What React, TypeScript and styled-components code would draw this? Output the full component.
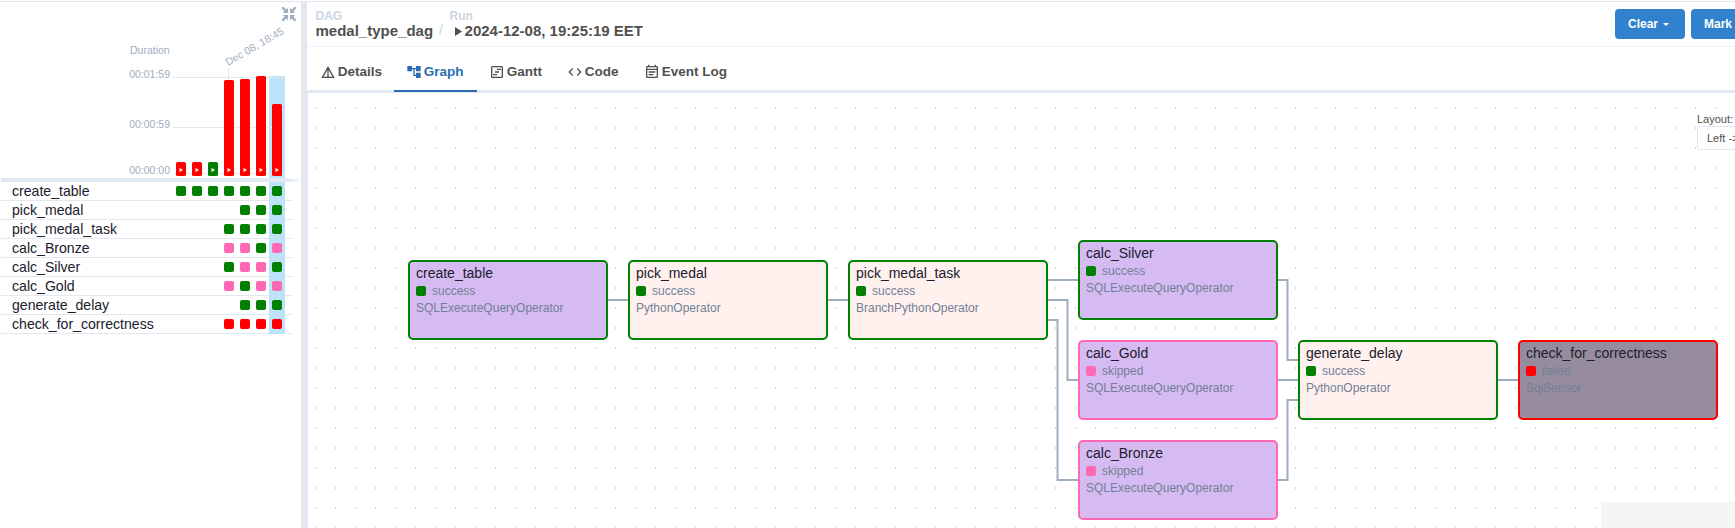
import React from 'react';
import styled, { createGlobalStyle } from 'styled-components';
import { MdDetails, MdAccountTree, MdOutlineViewTimeline, MdCode, MdOutlineEventNote } from 'react-icons/md';

const GREEN = '#008000';
const RED = '#ff0000';
const PINK = '#ff69b4';
const LINE = '#e2e8f0';

const Global = createGlobalStyle`
  * { box-sizing: border-box; }
  body { margin: 0; background: #fff; overflow: hidden; font-family: "Liberation Sans", Arial, sans-serif; color: #1a202c; }
`;

const Page = styled.div`
  display: flex;
  width: 1735px;
  height: 528px;
  overflow: hidden;
  border-top: 1px solid #fff;
`;
const GridPanel = styled.aside`
  width: 301px;
  flex: none;
  display: flex;
  flex-direction: column;
  border-top: 1px solid ${LINE};
  padding-left: 1px;
`;
const Splitter = styled.div`
  width: 6px;
  flex: none;
  background: ${LINE};
`;
const Main = styled.main`
  flex: 1;
  min-width: 0;
  display: flex;
  flex-direction: column;
  border-top: 1px solid ${LINE};
`;

const ChartHead = styled.div`
  position: relative;
  height: 176px;
  flex: none;
`;
const CollapseIcon = styled.svg`
  position: absolute;
  left: 279.5px;
  top: 3.5px;
  width: 16px;
  height: 16px;
`;
const Chart = styled.svg`
  display: block;
  width: 300px;
  height: 176px;
  font-size: 10.5px;
  fill: #a0aec0;
`;
const HeadRule = styled.div`
  height: 4px;
  width: 300px;
  flex: none;
  background: ${LINE};
  clip-path: polygon(0 0, 284px 0, 300px 70%, 284px 100%, 0 100%);
`;
const TaskRow = styled.div`
  height: 19px;
  flex: none;
  width: 292px;
  border-bottom: 1px solid ${LINE};
  display: flex;
  align-items: stretch;
`;
const TaskName = styled.div`
  flex: 1;
  padding-left: 11px;
  font-size: 14.1px;
  line-height: 18px;
  white-space: nowrap;
`;
const Cell = styled.div<{ $selected?: boolean }>`
  width: 16px;
  height: ${p => (p.$selected ? 19 : 18)}px;
  padding-bottom: ${p => (p.$selected ? 1 : 0)}px;
  background: ${p => (p.$selected ? '#bee3f8' : 'transparent')};
  display: flex;
  align-items: center;
  justify-content: center;
`;
const Cells = styled.div`
  display: flex;
  margin-right: 8px;
`;
const Square = styled.div<{ $color: string }>`
  width: 10px;
  height: 10px;
  border-radius: 2px;
  background: ${p => p.$color};
`;

const Header = styled.header`
  height: 45px;
  flex: none;
  display: flex;
  justify-content: space-between;
  border-bottom: 1px solid #edf2f7;
  padding: 7px 0 0 8.5px;
`;
const Crumbs = styled.div`
  display: flex;
  font-weight: bold;
  white-space: nowrap;
`;
const Crumb = styled.div``;
const CrumbLabel = styled.div`
  font-size: 12px;
  line-height: 15px;
  color: #cbd5e0;
`;
const CrumbValue = styled.div`
  display: flex;
  align-items: center;
  font-size: 15px;
  line-height: 14px;
  color: #51504f;
`;
const Slash = styled.div`
  width: 16.5px;
  padding: 14px 0 0 6px;
  font-weight: normal;
  font-size: 14px;
  line-height: 14px;
  color: #cbd5e0;
`;
const PlayMark = styled.svg`
  width: 7px;
  height: 9px;
  margin: 0 3px 0 5px;
`;
const Actions = styled.div`
  display: flex;
  gap: 6px;
  width: 120px;
  overflow: hidden;
`;
const Button = styled.button<{ $width: number }>`
  width: ${p => p.$width}px;
  height: 30px;
  flex: none;
  display: flex;
  align-items: center;
  gap: 5px;
  padding: 0 0 0 13px;
  border: 0;
  border-radius: 4px;
  background: #3182ce;
  color: #fff;
  font: bold 12px "Liberation Sans", Arial, sans-serif;
  white-space: nowrap;
`;
const Caret = styled.i`
  border: 3px solid transparent;
  border-top-color: #fff;
  border-bottom: 0;
`;

const Tabs = styled.nav`
  height: 46px;
  flex: none;
  display: flex;
  padding-left: 1px;
  border-bottom: 3px solid ${LINE};
`;
const Tab = styled.div<{ $active?: boolean; $width: number }>`
  width: ${p => p.$width}px;
  height: 45px;
  display: flex;
  align-items: center;
  gap: 2px;
  padding: 6px 0 0 11.7px;
  font-size: 13.5px;
  font-weight: bold;
  white-space: nowrap;
  color: ${p => (p.$active ? '#2b6cb0' : '#51504f')};
  border-bottom: 2px solid ${p => (p.$active ? '#2b6cb0' : 'transparent')};
  svg { width: 16px; height: 16px; flex: none; }
`;

const Canvas = styled.section`
  position: relative;
  flex: 1;
  overflow: hidden;
  border-left: 1px solid ${LINE};
`;
const Edges = styled.svg`
  position: absolute;
  inset: 0;
`;
const Node = styled.article<{ $x: number; $y: number; $border: string; $fill: string }>`
  position: absolute;
  left: ${p => p.$x}px;
  top: ${p => p.$y}px;
  width: 200px;
  height: 80px;
  padding: 3px 6px;
  border: 2px solid ${p => p.$border};
  border-radius: 5px;
  background: ${p => p.$fill};
  white-space: nowrap;
`;
const NodeTitle = styled.div`
  font-size: 14px;
  line-height: 17px;
`;
const NodeState = styled.div`
  display: flex;
  align-items: center;
  gap: 6px;
  font-size: 12px;
  line-height: 18px;
  color: #718096;
`;
const NodeOperator = styled.div`
  font-size: 12px;
  line-height: 16px;
  color: #718096;
`;
const LayoutControl = styled.div`
  position: absolute;
  left: 1389px;
  top: 20px;
  width: 120px;
  font-size: 11px;
  line-height: 13px;
  color: #51504f;
`;
const Select = styled.div`
  height: 24px;
  border: 1px solid ${LINE};
  border-radius: 2px;
  background: #fff;
  padding-left: 9px;
  font-size: 11px;
  line-height: 22px;
`;
const MiniMap = styled.div`
  position: absolute;
  left: 1293px;
  bottom: 0;
  width: 134px;
  height: 26px;
  background: #f5f5f5;
`;

const bars = [
  { x: 175, y: 160, color: RED },
  { x: 191, y: 160, color: RED },
  { x: 207, y: 160, color: GREEN },
  { x: 223, y: 78, color: RED },
  { x: 239, y: 77, color: RED },
  { x: 255, y: 74, color: RED },
  { x: 271, y: 102, color: RED },
];

const COLORS: Record<string, string> = { g: GREEN, r: RED, p: PINK };
const tasks: [string, string][] = [
  ['create_table', 'ggggggg'],
  ['pick_medal', '    ggg'],
  ['pick_medal_task', '   gggg'],
  ['calc_Bronze', '   ppgp'],
  ['calc_Silver', '   gppg'],
  ['calc_Gold', '   pgpp'],
  ['generate_delay', '    ggg'],
  ['check_for_correctness', '   rrrr'],
];

const SQL = '#d6bbf2';
const PY = '#fff2ee';
const nodes = [
  { x: 100, y: 167, name: 'create_table', state: 'success', op: 'SQLExecuteQueryOperator', fill: SQL },
  { x: 320, y: 167, name: 'pick_medal', state: 'success', op: 'PythonOperator', fill: PY },
  { x: 540, y: 167, name: 'pick_medal_task', state: 'success', op: 'BranchPythonOperator', fill: PY },
  { x: 770, y: 147, name: 'calc_Silver', state: 'success', op: 'SQLExecuteQueryOperator', fill: SQL },
  { x: 770, y: 247, name: 'calc_Gold', state: 'skipped', op: 'SQLExecuteQueryOperator', fill: SQL },
  { x: 770, y: 347, name: 'calc_Bronze', state: 'skipped', op: 'SQLExecuteQueryOperator', fill: SQL },
  { x: 990, y: 247, name: 'generate_delay', state: 'success', op: 'PythonOperator', fill: PY },
  { x: 1210, y: 247, name: 'check_for_correctness', state: 'failed', op: 'SqlSensor', fill: '#968c9d' },
];
const stateColor: Record<string, string> = { success: GREEN, skipped: PINK, failed: RED };

const edges = [
  'M299 207H321',
  'M519 207H541',
  'M739 187H771',
  'M739 207H759.5V287H771',
  'M739 227H749.5V387H771',
  'M969 187H979.5V267H991',
  'M969 287H991',
  'M969 387H979.5V307H991',
  'M1189 287H1211',
];

export default function App() {
  return (
    <Page>
      <Global />
      <GridPanel>
        <ChartHead>
          <Chart viewBox="1 2 300 176">
            <rect x="269" y="76" width="16" height="102" fill="#bee3f8" />
            <path d="M173 77.5H285M173 127.5H285M173 173.5H285M228.5 68V80" stroke={LINE} fill="none" />
            <text x="169.7" y="54" textAnchor="end">Duration</text>
            <text x="170" y="78" textAnchor="end">00:01:59</text>
            <text x="170" y="128" textAnchor="end">00:00:59</text>
            <text x="170" y="174" textAnchor="end">00:00:00</text>
            <text transform="translate(228 66) rotate(-30)">Dec 08, 18:45</text>
            {bars.map(b => (
              <g key={b.x}>
                <rect x={b.x + 1} y={b.y + 2} width="10" height={174 - b.y} rx="1.5" fill={b.color} />
                <path d={`M${b.x + 4.5} 168v4l3.5 -2z`} fill="#fff" />
              </g>
            ))}
          </Chart>
          <CollapseIcon viewBox="0 0 17 17" fill="#a0aec0">
            <path d="M7.5 7.5V1.8L5.6 3.7L2.2 .4L.4 2.2L3.7 5.6L1.8 7.5zM9.5 7.5V1.8L11.4 3.7L14.8 .4L16.6 2.2L13.3 5.6L15.2 7.5zM7.5 9.5V15.2L5.6 13.3L2.2 16.6L.4 14.8L3.7 11.4L1.8 9.5zM9.5 9.5V15.2L11.4 13.3L14.8 16.6L16.6 14.8L13.3 11.4L15.2 9.5z" />
          </CollapseIcon>
        </ChartHead>
        <HeadRule />
        {tasks.map(([name, states]) => (
          <TaskRow key={name}>
            <TaskName>{name}</TaskName>
            <Cells>
              {states.split('').map((s, i) => (
                <Cell key={i} $selected={i === 6}>{s !== ' ' && <Square $color={COLORS[s]} />}</Cell>
              ))}
            </Cells>
          </TaskRow>
        ))}
      </GridPanel>
      <Splitter />
      <Main>
        <Header>
          <Crumbs>
            <Crumb>
              <CrumbLabel>DAG</CrumbLabel>
              <CrumbValue>medal_type_dag</CrumbValue>
            </Crumb>
            <Slash>/</Slash>
            <Crumb>
              <CrumbLabel>Run</CrumbLabel>
              <CrumbValue>
                <PlayMark viewBox="0 0 7 9"><path d="M0 0V9L7 4.5z" fill="#51504f" /></PlayMark>
                2024-12-08, 19:25:19 EET
              </CrumbValue>
            </Crumb>
          </Crumbs>
          <Actions>
            <Button $width={70}>Clear <Caret /></Button>
            <Button $width={120}>Mark state as...</Button>
          </Actions>
        </Header>
        <Tabs>
          <Tab $width={86}><MdDetails />Details</Tab>
          <Tab $width={83} $active><MdAccountTree />Graph</Tab>
          <Tab $width={78}><MdOutlineViewTimeline />Gantt</Tab>
          <Tab $width={77}><MdCode />Code</Tab>
          <Tab $width={110}><MdOutlineEventNote />Event Log</Tab>
        </Tabs>
        <Canvas>
          <Edges width="1427" height="436">
            <defs>
              <pattern id="dots" x="7" y="14" width="20" height="20" patternUnits="userSpaceOnUse">
                <rect width="1" height="2" fill="#d0d2d6" />
              </pattern>
            </defs>
            <rect width="1427" height="436" fill="url(#dots)" />
            {edges.map(d => <path key={d} d={d} fill="none" stroke="#a0aec0" strokeWidth="2" />)}
          </Edges>
          {nodes.map(n => (
            <Node key={n.name} $x={n.x} $y={n.y} $border={stateColor[n.state]} $fill={n.fill}>
              <NodeTitle>{n.name}</NodeTitle>
              <NodeState><Square $color={stateColor[n.state]} />{n.state}</NodeState>
              <NodeOperator>{n.op}</NodeOperator>
            </Node>
          ))}
          <LayoutControl>
            Layout:
            <Select>Left -&gt; Right</Select>
          </LayoutControl>
          <MiniMap />
        </Canvas>
      </Main>
    </Page>
  );
}
